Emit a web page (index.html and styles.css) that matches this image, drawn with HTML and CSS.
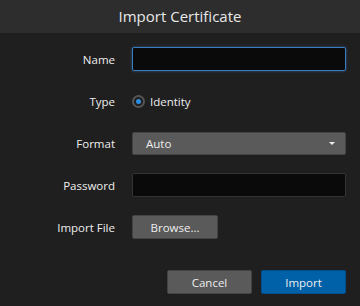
FILE: index.html
```html
<!DOCTYPE html>
<html lang="en">
<head>
    <meta charset="UTF-8">
    <title>Import Certificate</title>
    <link rel="stylesheet" href="styles.css">
</head>
<body>
    <div class="dialog">
        <div class="dialog-header">Import Certificate</div>

        <form class="dialog-body">
            <div class="form-row">
                <label class="form-label">Name</label>
                <div class="form-field">
                    <input type="text" class="text-input focused">
                </div>
            </div>

            <div class="form-row">
                <label class="form-label">Type</label>
                <div class="form-field">
                    <span class="radio"><span class="radio-dot"></span></span>
                    <span class="radio-text">Identity</span>
                </div>
            </div>

            <div class="form-row">
                <label class="form-label">Format</label>
                <div class="form-field">
                    <div class="select">
                        <span>Auto</span>
                        <span class="caret"></span>
                    </div>
                </div>
            </div>

            <div class="form-row">
                <label class="form-label">Password</label>
                <div class="form-field">
                    <input type="password" class="text-input">
                </div>
            </div>

            <div class="form-row">
                <label class="form-label">Import File</label>
                <div class="form-field">
                    <button type="button" class="btn btn-grey btn-browse">Browse...</button>
                </div>
            </div>
        </form>

        <div class="dialog-footer">
            <button type="button" class="btn btn-grey">Cancel</button>
            <button type="button" class="btn btn-blue">Import</button>
        </div>
    </div>
</body>
</html>
```

FILE: styles.css
```css
:root {
    --header-bg: #2d2d2d;
    --body-bg: #1f1f1f;
    --field-bg: #0a0a0a;
    --btn-grey: #5a5a5a;
    --btn-blue: #0060a8;
    --focus: #3a7cc0;
    --text: #eeeeee;
}

* {
    margin: 0;
    padding: 0;
    box-sizing: border-box;
}

body {
    font-family: "Open Sans", "DejaVu Sans", sans-serif;
    background: var(--body-bg);
    color: var(--text);
    width: 360px;
    height: 306px;
    overflow: hidden;
}

.dialog {
    display: flex;
    flex-direction: column;
    height: 100%;
}

.dialog-header {
    height: 33px;
    background: var(--header-bg);
    text-align: center;
    font-size: 15px;
    line-height: 33px;
    color: #e8e8e8;
}

.dialog-body {
    display: flex;
    flex-direction: column;
    gap: 18px;
    padding: 14px 14px 0 0;
}

.form-row {
    display: flex;
    align-items: center;
    height: 24px;
}

.form-label {
    width: 115px;
    text-align: right;
    font-size: 11.5px;
    font-weight: 500;
}

.form-field {
    flex: 1;
    margin-left: 17px;
    display: flex;
    align-items: center;
}

.text-input {
    width: 214px;
    height: 24px;
    background: var(--field-bg);
    border: 1px solid #333;
    border-radius: 2px;
    outline: none;
}

.text-input.focused {
    border-color: var(--focus);
    box-shadow: 0 0 3px rgba(58, 124, 192, 0.6);
}

.radio {
    width: 13px;
    height: 13px;
    border-radius: 50%;
    border: 2px solid #555;
    display: flex;
    align-items: center;
    justify-content: center;
}

.radio-dot {
    width: 5px;
    height: 5px;
    border-radius: 50%;
    background: #2e8ee0;
}

.radio-text {
    margin-left: 5px;
    font-size: 11.5px;
    font-weight: 500;
}

.select {
    width: 214px;
    height: 23px;
    background: var(--btn-grey);
    border: 1px solid #444;
    border-radius: 2px;
    display: flex;
    align-items: center;
    justify-content: space-between;
    padding: 0 10px 0 13px;
    font-size: 11.5px;
    font-weight: 500;
}

.caret {
    width: 0;
    height: 0;
    border-left: 3.5px solid transparent;
    border-right: 3.5px solid transparent;
    border-top: 3.5px solid #eee;
}

.btn {
    height: 24px;
    width: 85px;
    border: 1px solid #444;
    border-radius: 2px;
    font-family: inherit;
    font-size: 11.5px;
    font-weight: 500;
    color: #eeeeee;
}

.btn-grey {
    background: var(--btn-grey);
}

.btn-blue {
    background: var(--btn-blue);
    border-color: #004f8c;
}

.btn-browse {
    width: 86px;
}

.dialog-footer {
    display: flex;
    justify-content: flex-end;
    gap: 9px;
    padding: 0 14px;
    margin-top: 31px;
}
```
